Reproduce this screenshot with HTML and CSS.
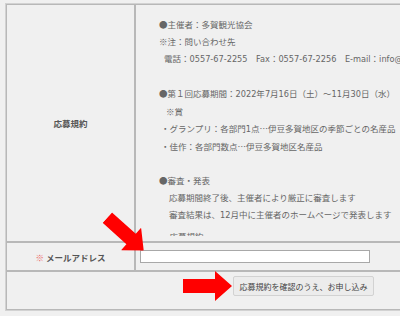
FILE: index.html
```html
<!DOCTYPE html>
<html lang="ja">
<head>
<meta charset="utf-8">
<title>応募フォーム</title>
<link rel="stylesheet" href="styles.css">
</head>
<body>
<div class="page">
  <table class="form">
    <tr>
      <td class="label">応募規約</td>
      <td class="terms-cell">
        <div class="terms">
          <p>●主催者：多賀観光協会</p>
          <p>※注：問い合わせ先</p>
          <p class="i-tel">電話：<span class="lat">0557-67-2255</span>　<span class="lat">Fax</span>：<span class="lat">0557-67-2256</span>　<span class="lat">E-mail</span>：<span class="lat">info@taga-kankou.jp</span></p>
          <p class="blank"></p>
          <p>●第１回応募期間：<span class="lat">2022</span>年<span class="lat">7</span>月<span class="lat">16</span>日（土）～<span class="lat">11</span>月<span class="lat">30</span>日（水）</p>
          <p class="i-prize">※賞</p>
          <p class="i-dot">・グランプリ：各部門<span class="lat">1</span>点…伊豆多賀地区の季節ごとの名産品</p>
          <p class="i-dot">・佳作：各部門数点…伊豆多賀地区名産品</p>
          <p class="blank"></p>
          <p>●審査・発表</p>
          <p class="i-judge">応募期間終了後、主催者により厳正に審査します</p>
          <p class="i-judge">審査結果は、<span class="lat">12</span>月中に主催者のホームページで発表します</p>
          <p class="i-dot clip-line">・応募規約・</p>
        </div>
      </td>
    </tr>
    <tr>
      <td class="label"><span class="req">※</span> メールアドレス</td>
      <td class="email-cell"><input class="email" type="text"></td>
    </tr>
    <tr>
      <td class="submit-cell" colspan="2"><button class="submit" type="button">応募規約を確認のうえ、お申し込み</button></td>
    </tr>
  </table>
  <svg class="arrow arrow-diag" width="49" height="30" viewBox="0 0 49 30"><polygon points="0,8 32,8 32,0 49,15 32,30 32,22 0,22"/></svg>
  <svg class="arrow arrow-right" width="49" height="30" viewBox="0 0 49 30"><polygon points="0,8 32,8 32,0 49,15 32,30 32,22 0,22"/></svg>
</div>
</body>
</html>
```
FILE: styles.css
```css
html, body {
  margin: 0;
  overflow: hidden;
  background: #f0f0f0;
}
body {
  font-family: "Noto Sans CJK JP", "Noto Sans", sans-serif;
  font-size: 8.5px;
  color: #666;
}
.page {
  position: relative;
  width: 400px;
  height: 316px;
  padding: 3px 0 0 5px;
  box-sizing: border-box;
}
.form {
  border-collapse: separate;
  border-spacing: 0;
  border: 1px solid #d2d2d2;
  width: 597px;
  table-layout: fixed;
  background: #f0f0f0;
}
.form td {
  border: 1px solid #b8b8b8;
  padding: 0;
  vertical-align: middle;
}
.form td.label {
  width: 127px;
  text-align: center;
  font-weight: bold;
  color: #555;
}
.req {
  color: #ec6a6a;
  font-weight: normal;
}
.form td.terms-cell {
  padding: 0 0 5px 0;
  vertical-align: top;
}
.terms {
  height: 220px;
  padding: 11px 0 0 23px;
  overflow: hidden;
  line-height: 17px;
  white-space: nowrap;
}
.terms p {
  margin: 0;
}
.terms .lat {
  font-family: "DejaVu Sans", sans-serif;
  font-size: 8.2px;
}
.terms .blank {
  height: 17px;
}
.i-tel { padding-left: 5px; }
.i-prize { padding-left: 7px; }
.i-dot { padding-left: 2px; }
.i-judge { padding-left: 10px; }
.terms .clip-line { margin-top: 4px; }
.form td.email-cell {
  height: 27px;
  padding-left: 4px;
}
.email {
  display: block;
  width: 230px;
  height: 13px;
  box-sizing: border-box;
  margin: 0;
  padding: 0;
  border: 1px solid #a8a8a8;
  background: #fff;
}
.form td.submit-cell {
  padding: 4px 0 13px;
}
.submit {
  display: block;
  margin: 0 auto;
  width: 141px;
  height: 20px;
  box-sizing: border-box;
  padding: 0;
  font-family: "Noto Sans CJK JP", sans-serif;
  font-size: 8px;
  color: #444;
  background: #ececec;
  border: 1px solid #d2d2d2;
  border-radius: 2px;
}
.arrow {
  position: absolute;
  fill: #ff0000;
}
.arrow-diag {
  left: 101px;
  top: 219px;
  transform: rotate(42deg);
}
.arrow-right {
  left: 183px;
  top: 271px;
}
```
